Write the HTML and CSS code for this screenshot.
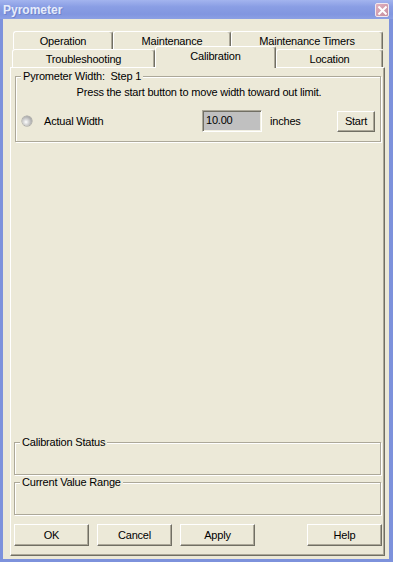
FILE: index.html
```html
<!DOCTYPE html>
<html>
<head>
<meta charset="utf-8">
<title>Pyrometer</title>
<link rel="stylesheet" href="styles.css">
</head>
<body>
<div class="window">
  <div class="titlebar">
    <span class="title">Pyrometer</span>
    <span class="close"><svg width="9" height="9" viewBox="0 0 9 9"><path d="M1.2 1.2L7.8 7.8M7.8 1.2L1.2 7.8" stroke="#fff" stroke-width="2" stroke-linecap="square"/></svg></span>
  </div>
  <div class="client">
    <div class="tabctl">
      <div class="tabrow row-back">
        <div class="tab w-op">Operation</div>
        <div class="tab w-mt">Maintenance</div>
        <div class="tab w-mtt">Maintenance Timers</div>
      </div>
      <div class="tabrow row-front">
        <div class="tab w-tr">Troubleshooting</div>
        <div class="tab w-ca selected">Calibration</div>
        <div class="tab w-lo">Location</div>
      </div>
      <div class="panel">
        <div class="group g1">
          <span class="legend">Pyrometer Width:&nbsp; Step 1</span>
          <div class="instr">Press the start button to move width toward out limit.</div>
          <div class="measure">
            <span class="led"></span>
            <span class="lbl">Actual Width</span>
            <span class="field">10.00</span>
            <span class="unit">inches</span>
            <button class="btn start">Start</button>
          </div>
        </div>
        <div class="spacer"></div>
        <div class="group g2"><span class="legend">Calibration Status</span></div>
        <div class="group g3"><span class="legend">Current Value Range</span></div>
        <div class="buttons">
          <button class="btn">OK</button>
          <button class="btn">Cancel</button>
          <button class="btn">Apply</button>
          <button class="btn help">Help</button>
        </div>
      </div>
    </div>
  </div>
</div>
</body>
</html>
```

FILE: styles.css
```css
* { box-sizing: border-box; }
html, body { margin: 0; padding: 0; }
body {
  width: 393px;
  height: 562px;
  overflow: hidden;
  font-family: "Liberation Sans", Arial, sans-serif;
  font-size: 11px;
  letter-spacing: -0.2px;
  color: #000;
  background: #7D92DC;
}
.window {
  width: 393px;
  height: 562px;
  display: flex;
  flex-direction: column;
  background: #7D92DC;
}
.titlebar {
  height: 19px;
  flex: none;
  display: flex;
  align-items: center;
  justify-content: space-between;
  padding: 0 4px 0 3px;
  background: linear-gradient(#A3B4EE, #8A9EE4 35%, #8196E0 75%, #8CA0E4);
}
.title {
  font-weight: bold;
  font-size: 12px;
  letter-spacing: 0;
  color: #E6ECFB;
  text-shadow: 1px 1px 0 #6F83CB;
}
.close {
  width: 14px;
  height: 14px;
  margin-top: 1px;
  border: 1px solid #F2E8EE;
  border-radius: 2px;
  background: linear-gradient(135deg, #E2B2C0, #C58C9E);
  display: flex;
  align-items: center;
  justify-content: center;
}
.client {
  flex: 1;
  margin: 0 4px 3px 3px;
  background: #ECE9D8;
  display: flex;
  flex-direction: column;
  padding: 12px 4px 3px 7px;
}
.tabctl {
  flex: 1;
  display: flex;
  flex-direction: column;
}
.tabrow {
  display: flex;
  height: 18px;
  flex: none;
  align-items: flex-end;
}
.row-back { padding-left: 3px; }
.row-front { padding-left: 2px; }
.tab {
  height: 18px;
  flex: none;
  border: 1px solid;
  border-color: #fff #716F64 transparent #fff;
  border-bottom: none;
  box-shadow: inset -1px 0 #ACA899;
  border-radius: 3px 3px 0 0;
  display: flex;
  align-items: center;
  justify-content: center;
  background: #ECE9D8;
}
.w-op { width: 100px; }
.w-mt { width: 118px; }
.w-mtt { width: 152px; }
.w-tr { width: 143px; }
.w-ca { width: 121px; }
.w-lo { width: 107px; }
.tab.selected {
  position: relative;
  z-index: 1;
  height: 22px;
  margin-bottom: -1px;
  padding-bottom: 3px;
}
.panel {
  flex: 1;
  display: flex;
  flex-direction: column;
  border: 1px solid;
  border-color: #fff #716F64 #716F64 #fff;
  box-shadow: inset -1px -1px #ACA899;
  padding: 0 2px 9px 3px;
}
.group {
  position: relative;
  border: 1px solid #ACA899;
  box-shadow: inset 1px 1px #fff, 1px 1px #fff;
}
.legend {
  position: absolute;
  top: -7px;
  left: 5px;
  padding: 0 2px;
  line-height: 13px;
  background: #ECE9D8;
  white-space: nowrap;
}
.g1 {
  margin: 8px 1px 0 1px;
  padding: 9px 4px 9px 6px;
}
.instr {
  line-height: 13px;
  text-align: center;
}
.measure {
  margin-top: 11px;
  display: grid;
  grid-template-columns: 22px 158px 60px 75px 38px;
  align-items: center;
  height: 22px;
}
.led {
  width: 10px;
  height: 10px;
  border-radius: 50%;
  background: radial-gradient(circle at 40% 60%, #fff 0, #E2E2E2 22%, #B4B4B4 60%, #8C8C8C 100%);
  box-shadow: 0 0 0 0.5px #9A9A9A;
}
.lbl { line-height: 13px; padding-top: 1px; }
.field {
  height: 22px;
  background: #C0C0C0;
  border: 1px solid;
  border-color: #ACA899 #fff #fff #ACA899;
  box-shadow: inset 1px 1px #716F64, inset -1px -1px #F1EFE2;
  padding: 2px 3px;
  line-height: 14px;
}
.unit { padding-left: 8px; padding-top: 1px; line-height: 13px; }
.btn {
  font: inherit;
  letter-spacing: inherit;
  color: #000;
  width: 75px;
  height: 22px;
  padding: 0;
  margin: 0;
  background: #ECE9D8;
  border: 1px solid;
  border-color: #fff #716F64 #716F64 #fff;
  box-shadow: inset -1px -1px #ACA899;
  border-radius: 0;
}
.btn.start { width: 38px; height: 21px; }
.spacer { flex: 1; }
.g2, .g3 {
  height: 33px;
  margin: 0 1px 0 0;
}
.g3 { margin-top: 7px; }
.buttons {
  margin-top: 9px;
  display: flex;
  gap: 8px;
}
.help { margin-left: auto; }
```
